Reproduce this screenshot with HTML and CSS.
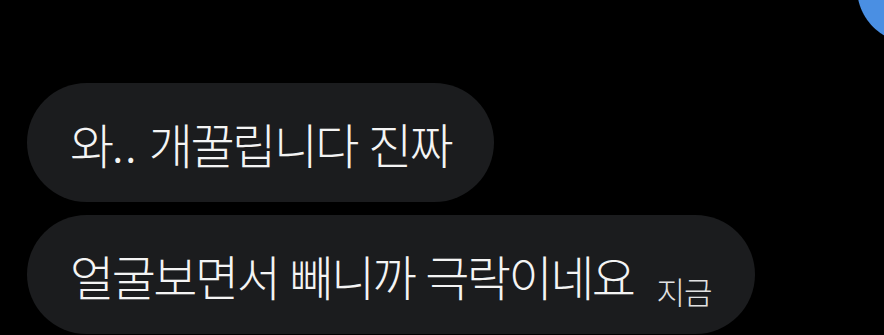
FILE: index.html
```html
<!DOCTYPE html>
<html lang="ko">

<head>
    <meta charset="UTF-8">
    <meta name="viewport" content="width=device-width, initial-scale=1.0">
    <title>Chat</title>
    <link rel="stylesheet" href="styles.css">
</head>

<body>

    <div class="chat">
        <div class="bubble">
            <span class="msg">와<span class="dots">..</span> 개꿀립니다 진짜</span>
        </div>
        <div class="bubble">
            <span class="msg">얼굴보면서 빼니까 극락이네요</span>
            <span class="time">지금</span>
        </div>
    </div>

</body>

</html>
```

FILE: styles.css
```css
* {
    margin: 0;
    padding: 0;
    box-sizing: border-box;
}

/* blue circle peeking in at the top right corner */
body {
    background: radial-gradient(circle at 912px -12px, #4a8fe3 54.5px, #000 55.5px);
    font-family: "Noto Sans CJK KR", "Noto Sans", sans-serif;
    color: #f4f4f4;
    width: 884px;
    height: 335px;
    overflow: hidden;
}

.chat {
    display: flex;
    flex-direction: column;
    align-items: flex-start;
    gap: 13px;
    padding-top: 83px;
    padding-left: 27px;
}

.bubble {
    display: flex;
    align-items: center;
    height: 119px;
    padding: 0 43px;
    border-radius: 60px;
    background-color: #1b1c1e;
}

.msg {
    font-size: 48px;
    font-weight: 300;
    line-height: 1;
    letter-spacing: -2.5px;
}

.dots {
    letter-spacing: 1px;
}

.time {
    font-size: 31px;
    font-weight: 300;
    line-height: 1;
    letter-spacing: -1px;
    color: #e2e2e2;
    margin-left: 23px;
    margin-top: 32px;
}
```
